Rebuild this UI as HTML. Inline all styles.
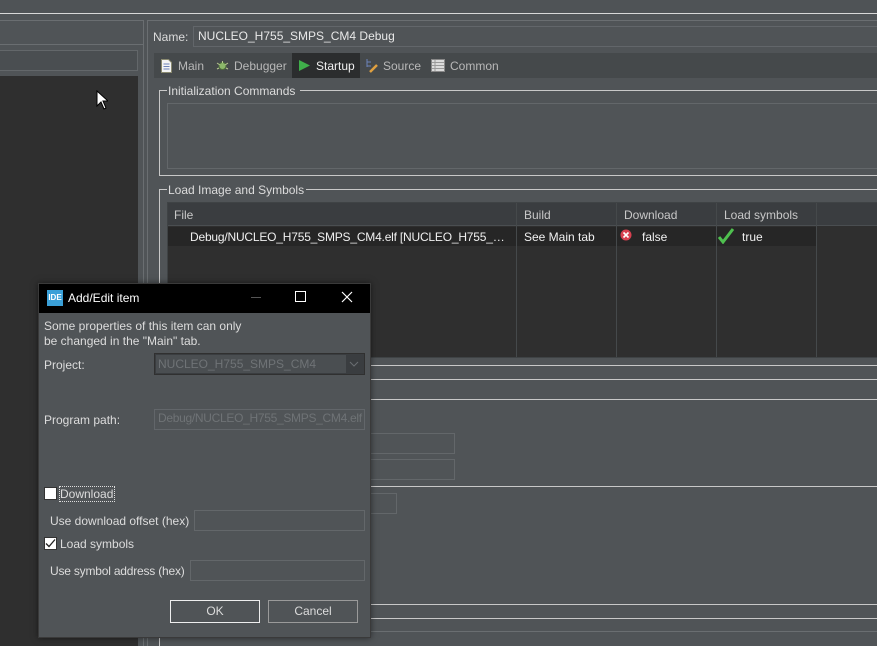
<!DOCTYPE html>
<html><head><style>
*{margin:0;padding:0;box-sizing:border-box}
body{width:877px;height:646px;overflow:hidden;background:#505457;font-family:"Liberation Sans",sans-serif;font-size:12px;color:#dcdcdc;position:relative}
.a{position:absolute}
.hl{position:absolute;height:1px;background:#c8c8c8}
.vl{position:absolute;width:1px;background:#c8c8c8}
.box{position:absolute;border:1px solid #63676a}
.t{position:absolute;white-space:nowrap}
</style></head><body>
<div class="a" style="left:0;top:0;width:877px;height:13px;background:#4f5356"></div>
<div class="hl" style="left:0;top:13px;width:877px;background:#d8d8d8"></div>
<div class="hl" style="left:0;top:20px;width:143px;background:#6a6e71"></div>
<div class="vl" style="left:143px;top:20px;height:626px;background:#6a6e71"></div>
<div class="vl" style="left:147px;top:20px;height:626px;background:#6a6e71"></div>
<div class="hl" style="left:148px;top:20px;width:729px;background:#6a6e71"></div>
<div class="hl" style="left:0;top:44px;width:143px;background:#6a6e71"></div>
<div class="box" style="left:-2px;top:50px;width:140px;height:21px;background:#4a4e51"></div>
<div class="a" style="left:0;top:76px;width:138px;height:570px;background:#2f2f2f"></div>
<svg class="a" style="left:96px;top:90px" width="12" height="20"><path d="M1 1 L1 16 L5 12 L8 19 L10 18 L7 11 L12 11 Z" fill="#fff" stroke="#000" stroke-width="1"/></svg>

<div class="t" style="left:153px;top:30px">Name:</div>
<div class="box" style="left:193px;top:26px;width:690px;height:21px;background:#505457;border-color:#62666a"></div>
<div class="t" style="left:198px;top:29px;color:#e8e8e8">NUCLEO_H755_SMPS_CM4 Debug</div>

<div class="a" style="left:154px;top:53px;width:723px;height:25px;background:#45494b"></div>
<div class="a" style="left:292px;top:53px;width:68px;height:25px;background:#2b2d2e"></div>
<svg class="a" style="left:161px;top:59px" width="11" height="14"><path d="M0.5 0.5H7.5L10.5 3.5V13.5H0.5Z" fill="#f4f4f4" stroke="#8a8a70"/><path d="M2.5 5H8.5M2.5 7.5H8.5M2.5 10H8.5" stroke="#6b82b8"/></svg>
<div class="t" style="left:178px;top:59px;color:#b8b8b8">Main</div>
<svg class="a" style="left:216px;top:59px" width="13" height="13"><circle cx="6.5" cy="7" r="3.5" fill="#8cb86a" stroke="#4e6e3a"/><path d="M1 4L4 6M12 4L9 6M1 10L3 9M12 10L10 9M6.5 2V4" stroke="#b8c890"/></svg>
<div class="t" style="left:234px;top:59px;color:#b8b8b8">Debugger</div>
<svg class="a" style="left:298px;top:59px" width="13" height="13"><path d="M1 1L12 6.5L1 12Z" fill="#3fae4a"/></svg>
<div class="t" style="left:316px;top:59px;color:#f0f0f0">Startup</div>
<svg class="a" style="left:365px;top:58px" width="14" height="16"><path d="M2 1V9M2 4H6M2 8H6" stroke="#6b82b8"/><path d="M5 14L12 7" stroke="#e0a040" stroke-width="2.5"/></svg>
<div class="t" style="left:383px;top:59px;color:#b8b8b8">Source</div>
<svg class="a" style="left:431px;top:59px" width="14" height="13"><rect x="0.5" y="0.5" width="13" height="12" fill="#dcdcdc" stroke="#888"/><path d="M1 3.5H13M1 6.5H13M1 9.5H13M4 1V12" stroke="#9a9a9a"/></svg>
<div class="t" style="left:450px;top:59px;color:#b8b8b8">Common</div>

<div class="hl" style="left:159px;top:90px;width:8px"></div>
<div class="t" style="left:168px;top:84px">Initialization Commands</div>
<div class="hl" style="left:300px;top:90px;width:577px"></div>
<div class="vl" style="left:159px;top:90px;height:86px"></div>
<div class="hl" style="left:159px;top:175px;width:718px"></div>
<div class="box" style="left:167px;top:103px;width:720px;height:66px"></div>

<div class="hl" style="left:159px;top:189px;width:8px"></div>
<div class="t" style="left:168px;top:183px">Load Image and Symbols</div>
<div class="hl" style="left:306px;top:189px;width:571px"></div>
<div class="vl" style="left:159px;top:189px;height:457px"></div>
<div class="a" style="left:167px;top:202px;width:720px;height:156px;background:#2f2f2f;border:1px solid #3f4345"></div>
<div class="a" style="left:168px;top:203px;width:709px;height:23px;background:#3a3d40;border-bottom:1px solid #4a4e51"></div>
<div class="t" style="left:174px;top:208px;color:#c8c8c8">File</div>
<div class="t" style="left:524px;top:208px;color:#c8c8c8">Build</div>
<div class="t" style="left:624px;top:208px;color:#c8c8c8">Download</div>
<div class="t" style="left:724px;top:208px;color:#c8c8c8">Load symbols</div>
<div class="a" style="left:168px;top:227px;width:649px;height:19px;background:#262626"></div>
<div class="vl" style="left:516px;top:203px;height:154px;background:#45494b"></div>
<div class="vl" style="left:616px;top:203px;height:154px;background:#45494b"></div>
<div class="vl" style="left:716px;top:203px;height:154px;background:#45494b"></div>
<div class="vl" style="left:816px;top:203px;height:154px;background:#45494b"></div>
<div class="t" style="left:190px;top:230px;color:#f0f0f0;width:322px;overflow:hidden;text-overflow:ellipsis;letter-spacing:-0.2px">Debug/NUCLEO_H755_SMPS_CM4.elf [NUCLEO_H755_SMPS_CM4]</div>
<div class="t" style="left:524px;top:230px;color:#f0f0f0">See Main tab</div>
<svg class="a" style="left:620px;top:229px" width="12" height="12"><circle cx="6" cy="6" r="5.5" fill="#d84050"/><path d="M3.5 3.5L8.5 8.5M8.5 3.5L3.5 8.5" stroke="#fff" stroke-width="1.6"/></svg>
<div class="t" style="left:642px;top:230px;color:#f0f0f0">false</div>
<svg class="a" style="left:718px;top:228px" width="16" height="16"><path d="M1 9L5 14L15 1" fill="none" stroke="#4fc04f" stroke-width="3"/></svg>
<div class="t" style="left:742px;top:230px;color:#f0f0f0">true</div>

<div class="hl" style="left:160px;top:365px;width:717px"></div>
<div class="hl" style="left:160px;top:379px;width:717px"></div>
<div class="hl" style="left:160px;top:399px;width:717px"></div>
<div class="box" style="left:360px;top:433px;width:95px;height:21px"></div>
<div class="box" style="left:360px;top:459px;width:95px;height:21px"></div>
<div class="hl" style="left:160px;top:486px;width:717px"></div>
<div class="box" style="left:360px;top:493px;width:37px;height:21px"></div>
<div class="hl" style="left:160px;top:604px;width:717px"></div>
<div class="hl" style="left:160px;top:618px;width:717px"></div>
<div class="hl" style="left:160px;top:631px;width:717px;background:#6a6e71"></div>

<!-- dialog -->
<div class="a" style="left:38px;top:283px;width:333px;height:355px;background:#505457;border:1px solid #3a3a3a;box-shadow:0 0 6px rgba(0,0,0,.5)"></div>
<div class="a" style="left:39px;top:284px;width:331px;height:29px;background:#000"></div>
<div class="a" style="left:47px;top:290px;width:16px;height:16px;background:#3aa0d8;color:#fff;font-size:8px;font-weight:bold;line-height:16px;text-align:center">IDE</div>
<div class="t" style="left:68px;top:291px;color:#fff;font-size:12px">Add/Edit item</div>
<div class="hl" style="left:251px;top:297px;width:10px;background:#555"></div>
<div class="a" style="left:295px;top:291px;width:11px;height:11px;border:1px solid #fff"></div>
<svg class="a" style="left:341px;top:291px" width="12" height="12"><path d="M1 1L11 11M11 1L1 11" stroke="#fff" stroke-width="1.2"/></svg>
<div class="t" style="left:44px;top:319px;line-height:15px">Some properties of this item can only<br>be changed in the "Main" tab.</div>
<div class="t" style="left:44px;top:358px">Project:</div>
<div class="a" style="left:154px;top:353px;width:211px;height:22px;background:#3a3d40;border:1px solid #303030"></div>
<div class="a" style="left:156px;top:355px;width:190px;height:18px;background:#4a4e51"></div>
<div class="t" style="left:158px;top:357px;color:#6f7376">NUCLEO_H755_SMPS_CM4</div>
<svg class="a" style="left:349px;top:361px" width="10" height="6"><path d="M1 1L5 5L9 1" fill="none" stroke="#6a6e71"/></svg>
<div class="t" style="left:44px;top:413px">Program path:</div>
<div class="box" style="left:154px;top:409px;width:211px;height:21px;border-color:#62666a"></div>
<div class="t" style="left:158px;top:411px;color:#6f7376;letter-spacing:-0.3px">Debug/NUCLEO_H755_SMPS_CM4.elf</div>
<div class="a" style="left:44px;top:487px;width:13px;height:13px;background:#fff;border:1px solid #333"></div>
<div class="a" style="left:59px;top:486px;width:56px;height:16px;border:1px dotted #ddd"></div>
<div class="t" style="left:60px;top:487px">Download</div>
<div class="t" style="left:50px;top:514px">Use download offset (hex)</div>
<div class="box" style="left:194px;top:510px;width:171px;height:21px"></div>
<div class="a" style="left:44px;top:537px;width:13px;height:13px;background:#fff;border:1px solid #333"></div>
<svg class="a" style="left:45px;top:538px" width="11" height="11"><path d="M1 5.5L4 8.5L10 1.5" fill="none" stroke="#222" stroke-width="1.3"/></svg>
<div class="t" style="left:60px;top:537px">Load symbols</div>
<div class="t" style="left:50px;top:564px;letter-spacing:-0.2px">Use symbol address (hex)</div>
<div class="box" style="left:190px;top:560px;width:175px;height:21px"></div>
<div class="a" style="left:170px;top:600px;width:90px;height:23px;border:1px solid #eee;text-align:center;line-height:21px">OK</div>
<div class="a" style="left:268px;top:600px;width:90px;height:23px;border:1px solid #9a9a9a;text-align:center;line-height:21px">Cancel</div>
</body></html>
